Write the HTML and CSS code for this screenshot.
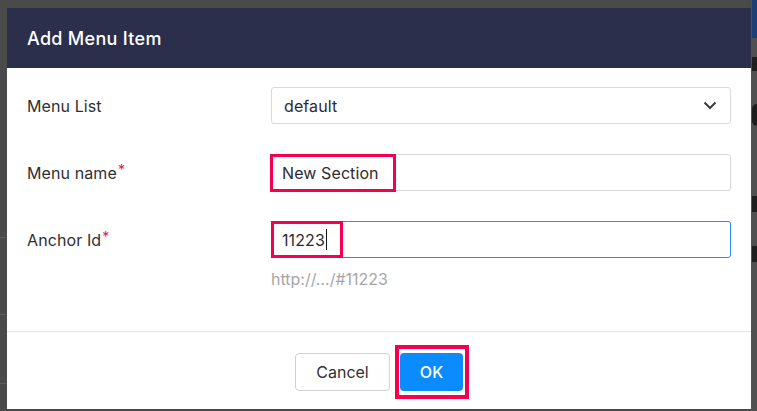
FILE: index.html
```html
<!DOCTYPE html>
<html>
<head>
<meta charset="utf-8">
<link rel="stylesheet" href="styles.css">
</head>
<body>
<div class="screen">
  <div class="left-strip">
    <div class="line l1"></div>
    <div class="line l2"></div>
    <div class="line l3"></div>
  </div>
  <div class="modal">
    <div class="modal-header">Add Menu Item</div>
    <div class="modal-body">
      <div class="row">
        <div class="label">Menu List</div>
        <div class="field">
          <div class="select">
            <span>default</span>
            <svg class="chev" width="14" height="9" viewBox="0 0 14 9"><path d="M1.5 1.5 L7 7 L12.5 1.5" fill="none" stroke="#3d3d3d" stroke-width="2"/></svg>
          </div>
        </div>
      </div>
      <div class="row">
        <div class="label">Menu name<sup class="req">*</sup></div>
        <div class="field">
          <div class="input">New Section</div>
          <span class="mark mark-name"></span>
        </div>
      </div>
      <div class="row">
        <div class="label">Anchor Id<sup class="req">*</sup></div>
        <div class="field">
          <div class="input focus">11223<span class="caret"></span></div>
          <span class="mark mark-anchor"></span>
          <div class="hint">http://…/#11223</div>
        </div>
      </div>
    </div>
    <div class="modal-footer">
      <button class="btn btn-cancel">Cancel</button>
      <div class="ok-wrap">
        <button class="btn btn-ok">OK</button>
        <span class="mark mark-ok"></span>
      </div>
    </div>
  </div>
  <div class="right-strip">
    <div class="rs-blue"></div>
    <div class="rs-bit b1"></div>
    <div class="rs-bit b2"></div>
    <div class="rs-bit b3"></div>
    <div class="rs-bit b4"></div>
  </div>
</div>
</body>
</html>
```
FILE: styles.css
```css
* { box-sizing: border-box; }
html, body { margin: 0; padding: 0; }
body {
  width: 757px;
  height: 411px;
  overflow: hidden;
  background: #4a4a4a;
  font-family: Inter, "Open Sans", "Liberation Sans", sans-serif;
  color: #2f2f33;
}
.screen {
  display: flex;
  height: 411px;
}
.left-strip {
  width: 7px;
  position: relative;
  background: #4a4a4a;
}
.line {
  position: absolute;
  left: 0;
  width: 7px;
  height: 1px;
  background: #5c5c5c;
}
.l1 { top: 237px; }
.l2 { top: 314px; }
.l3 { top: 383px; }
.modal {
  width: 744px;
  margin-top: 8px;
  height: 401px;
  background: #fff;
  display: flex;
  flex-direction: column;
}
.modal-header {
  height: 60px;
  background: #2c2f4c;
  color: #fff;
  font-size: 18px;
  font-weight: 500;
  padding-left: 20px;
  display: flex;
  align-items: center;
  letter-spacing: 0.3px;
}
.modal-body {
  padding: 19px 20px 0 20px;
  display: flex;
  flex-direction: column;
  gap: 30px;
  height: 264px;
  border-bottom: 1px solid #e6e6e6;
}
.row {
  display: flex;
  align-items: flex-start;
}
.label {
  width: 244px;
  height: 37px;
  display: flex;
  align-items: center;
  font-size: 16px;
  color: #2f2f33;
  letter-spacing: 0.1px;
}
.req {
  color: #e8154a;
  font-size: 14px;
  align-self: flex-start;
  margin-top: 7px;
  margin-left: 1px;
}
.field {
  width: 460px;
  position: relative;
}
.select, .input {
  height: 37px;
  border: 1px solid #d6d8db;
  border-radius: 3px;
  display: flex;
  align-items: center;
  font-size: 16px;
  color: #2b2b30;
  background: #fff;
  letter-spacing: 0.1px;
}
.select {
  padding: 0 13px 0 12px;
  justify-content: space-between;
}
.input {
  padding-left: 10px;
}
.input.focus {
  border-color: #2a8cf0;
}
.caret {
  display: inline-block;
  width: 1px;
  height: 21px;
  background: #111;
  margin-left: 1px;
}
.hint {
  margin-top: 11px;
  font-size: 16px;
  color: #a6a6a6;
  line-height: 20px;
}
.mark {
  position: absolute;
  border: 3px solid #f5004f;
  pointer-events: none;
}
.mark-name {
  left: -1px;
  top: 0;
  width: 126px;
  height: 38px;
}
.mark-anchor {
  left: 0;
  top: 0;
  width: 72px;
  height: 37px;
}
.modal-footer {
  flex: 1;
  display: flex;
  justify-content: center;
  align-items: center;
  gap: 10px;
  padding-top: 2px;
}
.btn {
  height: 38px;
  border-radius: 4px;
  font-family: inherit;
  font-size: 16px;
  cursor: pointer;
}
.btn-cancel {
  width: 95px;
  background: #fff;
  border: 1px solid #cfd2d6;
  color: #2f2f33;
}
.ok-wrap {
  position: relative;
}
.btn-ok {
  width: 63px;
  background: #0a8cff;
  border: none;
  color: #fff;
  font-weight: 500;
  display: block;
}
.mark-ok {
  left: -5px;
  right: -6px;
  top: -8px;
  bottom: -8px;
  border-width: 4px;
}
.right-strip {
  width: 6px;
  position: relative;
  background: #505050;
}
.rs-blue {
  position: absolute;
  top: 0;
  left: 1px;
  width: 5px;
  height: 38px;
  background: #1c3f78;
}
.rs-bit {
  position: absolute;
  left: 1px;
  width: 5px;
  background: #1e1e1e;
}
.b1 { top: 57px; height: 14px; }
.b2 { top: 104px; height: 22px; border-radius: 6px 0 0 6px; }
.b3 { top: 196px; height: 16px; }
.b4 { top: 246px; height: 16px; }
```
